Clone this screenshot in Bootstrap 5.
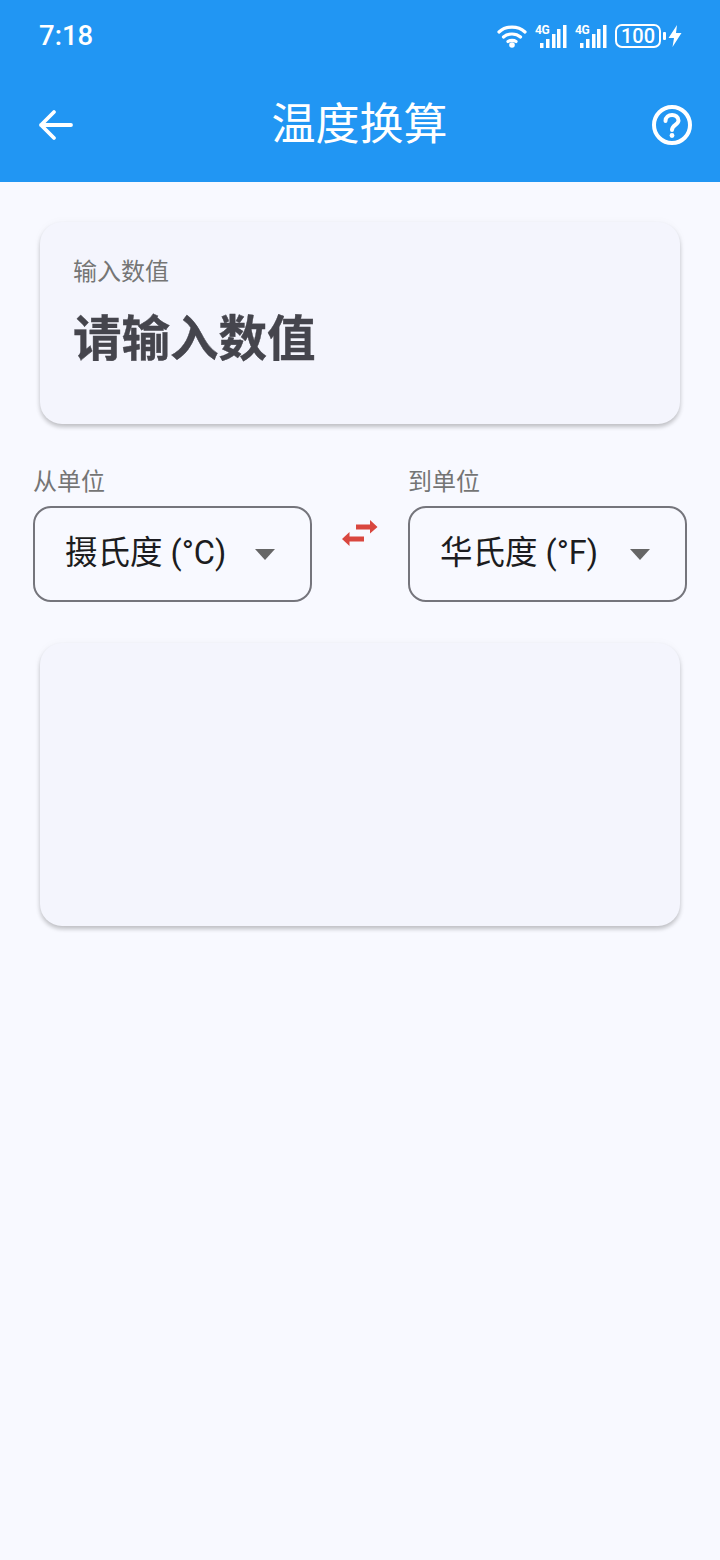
<!DOCTYPE html>
<html lang="zh-CN">
<head>
  <meta charset="UTF-8">
  <meta name="viewport" content="width=device-width, initial-scale=1">
  <title>温度换算</title>
  <link href="https://cdn.jsdelivr.net/npm/bootstrap@5.3.0/dist/css/bootstrap.min.css" rel="stylesheet">
  <style>
    body {
      background-color: #f8f9ff;
      font-family: Roboto, "Noto Sans CJK SC", sans-serif;
      min-height: 1560px;
    }
    .app-head { background-color: #2196f3; color: #fff; height: 182px; }
    .status-row { height: 72px; padding: 0 38px 0 39px; }
    .status-time { font-size: 27.500px; font-weight: 500; line-height: 1; }
    .status-icons { gap: 8px; }
    .sim-signal { position: relative; width: 32px; height: 24px; }
    .net-label { position: absolute; left: 0; top: 0; font-size: 12px; font-weight: 700; line-height: 1; letter-spacing: -.3px; }
    .batt-box { width: 46px; height: 24px; border: 2.500px solid #fff; border-radius: 7px; font-size: 20px; font-weight: 500; line-height: 1; }
    .batt-wrap { gap: 2px; }
    .bolt-icon { margin-left: -6px; }
    .tool-row { height: 110px; padding: 0 27px 4px 37px; }
    .tool-title { font-size: 44px; font-weight: 400; line-height: 1; margin: 0 7px 0 0; }
    .page-body { padding: 40px 33px 0; }
    .big-panel {
      background-color: #f4f5fd;
      border-radius: 22px;
      margin: 0 7px;
      box-shadow: 0 3px 4px rgba(0, 0, 0, .22), 0 0 10px rgba(0, 0, 0, .03);
    }
    .panel-input { height: 202px; padding: 34px 33px 0; }
    .panel-result { height: 283px; margin-top: 41px; }
    .panel-label { font-size: 24px; line-height: 32px; color: #757575; }
    .panel-value { font-size: 48.500px; font-weight: 700; line-height: 64px; color: #45454d; margin-top: 20px; -webkit-text-stroke: .4px #45454d; }
    .unit-row { margin-top: 41px; }
    .unit-col { width: 279px; }
    .unit-label { font-size: 24px; line-height: 34px; color: #757575; margin-bottom: 7px; }
    .unit-select {
      height: 96px;
      border: 2px solid #75757c;
      border-radius: 18px;
      padding: 0 35px 0 30px;
      font-size: 32.500px;
      color: #1c1c20;
    }
    .unit-text { margin-bottom: 1px; }
    .unit-caret { width: 0; height: 0; border-left: 10px solid transparent; border-right: 10px solid transparent; border-top: 11px solid #666; }
    .swap-col { padding-top: 52px; }
  </style>
</head>
<body>

<!-- Header -->
<div class="app-head">
  <div class="status-row d-flex align-items-center justify-content-between">
    <span class="status-time">7:18</span>
    <div class="status-icons d-flex align-items-center">
      <svg width="30" height="24" viewBox="0 0 30 24" fill="none" stroke="#fff" stroke-width="3.200" stroke-linecap="round">
        <path d="M2 8C9 1.500 21 1.500 28 8"/>
        <path d="M6.500 13C11 9 19 9 23.500 13"/>
        <path d="M11 17.500C13 16 17 16 19 17.500"/>
        <circle cx="15" cy="21" r="2.800" fill="#fff" stroke="none"/>
      </svg>
      <div class="sim-signal">
        <span class="net-label">4G</span>
        <svg width="32" height="24" viewBox="0 0 32 24" fill="#fff">
          <rect x="5" y="18" width="3.500" height="5"/><rect x="11" y="14" width="3.500" height="9"/>
          <rect x="17" y="9" width="3.500" height="14"/><rect x="22" y="4" width="3.500" height="19"/>
          <rect x="28" y="0" width="3.500" height="23"/>
        </svg>
      </div>
      <div class="sim-signal">
        <span class="net-label">4G</span>
        <svg width="32" height="24" viewBox="0 0 32 24" fill="#fff">
          <rect x="5" y="18" width="3.500" height="5"/><rect x="11" y="14" width="3.500" height="9"/>
          <rect x="17" y="9" width="3.500" height="14"/><rect x="22" y="4" width="3.500" height="19"/>
          <rect x="28" y="0" width="3.500" height="23"/>
        </svg>
      </div>
      <div class="batt-wrap d-flex align-items-center">
        <span class="batt-box d-flex align-items-center justify-content-center">100</span>
        <svg width="3" height="8" viewBox="0 0 3 8" fill="#fff"><rect width="3" height="8" rx="1"/></svg>
      </div>
      <svg class="bolt-icon" width="14" height="22" viewBox="0 0 14 22" fill="#fff"><path d="M9 0L0.500 13H6L4.500 22L13.500 8H8Z"/></svg>
    </div>
  </div>
  <div class="tool-row d-flex align-items-center justify-content-between">
    <svg width="38" height="34" viewBox="0 0 38 34" fill="none" stroke="#fff" stroke-width="3.800" stroke-linecap="round" stroke-linejoin="round">
      <path d="M34 17H4M17 4L4 17L17 30"/>
    </svg>
    <h1 class="tool-title">温度换算</h1>
    <svg width="42" height="42" viewBox="0 0 42 42" fill="none" stroke="#fff" stroke-width="4" stroke-linecap="round">
      <circle cx="21" cy="21" r="18"/>
      <path d="M14.500 17C14.500 9 27.500 9 27.500 16.500C27.500 21 21 21 21 26"/>
      <circle cx="21" cy="31.500" r="2.400" fill="#fff" stroke="none"/>
    </svg>
  </div>
</div>

<div class="page-body">
  <!-- Input -->
  <div class="big-panel panel-input">
    <div class="panel-label">输入数值</div>
    <div class="panel-value">请输入数值</div>
  </div>

  <!-- Units -->
  <div class="unit-row d-flex justify-content-between">
    <div class="unit-col">
      <div class="unit-label">从单位</div>
      <div class="unit-select d-flex align-items-center justify-content-between">
        <span class="unit-text">摄氏度 (°C)</span><span class="unit-caret"></span>
      </div>
    </div>
    <div class="swap-col">
      <svg width="38" height="30" viewBox="0 0 38 30" fill="#d9473f">
        <path d="M15 7.500H29V3L36.500 10L29 16.500V12.500H15Z"/>
        <path d="M23 19.500H8.500V15L1 22L8.500 29V24.500H23Z"/>
      </svg>
    </div>
    <div class="unit-col">
      <div class="unit-label">到单位</div>
      <div class="unit-select d-flex align-items-center justify-content-between">
        <span class="unit-text">华氏度 (°F)</span><span class="unit-caret"></span>
      </div>
    </div>
  </div>

  <!-- Result -->
  <div class="big-panel panel-result"></div>
</div>

<script src="https://cdn.jsdelivr.net/npm/bootstrap@5.3.0/dist/js/bootstrap.bundle.min.js"></script>
</body>
</html>
